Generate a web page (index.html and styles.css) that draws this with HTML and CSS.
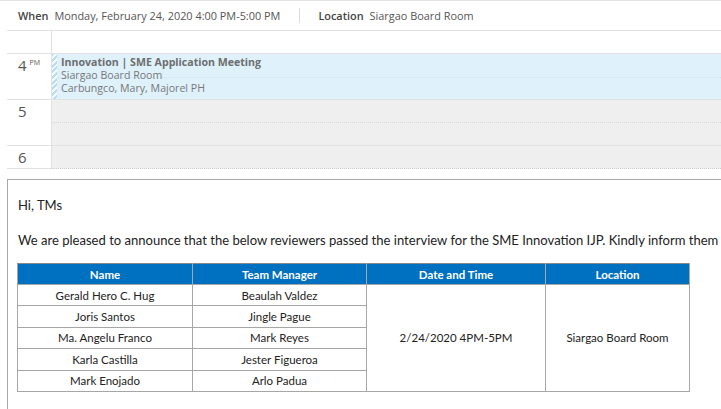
FILE: index.html
```html
<!DOCTYPE html>
<html>
<head>
<meta charset="utf-8">
<link rel="stylesheet" href="styles.css">
</head>
<body>
<div class="meta">
  <span class="lbl">When</span><span class="val">Monday, February 24, 2020 4:00 PM-5:00 PM</span>
  <span class="sep"></span>
  <span class="lbl">Location</span><span class="val">Siargao Board Room</span>
</div>
<div class="cal">
  <div class="gut r0"></div><div class="day r0"></div>
  <div class="gut r1"><span class="hr">4</span><span class="ampm">PM</span></div>
  <div class="day r1 ev">
    <div class="strip"></div>
    <div class="evbody">
      <div class="half"></div>
      <div class="evtext">
        <div class="evtitle">Innovation | SME Application Meeting</div>
        <div class="evsub">Siargao Board Room</div>
        <div class="evsub">Carbungco, Mary, Majorel PH</div>
      </div>
    </div>
  </div>
  <div class="gut r1"><span class="hr">5</span></div>
  <div class="day r1 busy"><div class="half"></div></div>
  <div class="gut r3"><span class="hr">6</span></div>
  <div class="day r3 busy last"></div>
</div>
<div class="msg">
  <p class="p1">Hi, TMs</p>
  <p class="p2">We are pleased to announce that the below reviewers passed the interview for the SME Innovation IJP. Kindly inform them</p>
  <table class="tbl">
    <colgroup><col class="c1"><col class="c2"><col class="c3"><col class="c4"></colgroup>
    <thead>
      <tr><th>Name</th><th>Team Manager</th><th>Date and Time</th><th>Location</th></tr>
    </thead>
    <tbody>
      <tr><td>Gerald Hero C. Hug</td><td>Beaulah Valdez</td><td rowspan="5">2/24/2020 4PM-5PM</td><td rowspan="5">Siargao Board Room</td></tr>
      <tr><td>Joris Santos</td><td>Jingle Pague</td></tr>
      <tr><td>Ma. Angelu Franco</td><td>Mark Reyes</td></tr>
      <tr><td>Karla Castilla</td><td>Jester Figueroa</td></tr>
      <tr><td>Mark Enojado</td><td>Arlo Padua</td></tr>
    </tbody>
  </table>
</div>
</body>
</html>
```
FILE: styles.css
```css
html, body {
  margin: 0;
  padding: 0;
  background: #ffffff;
}
html {
  height: 409px;
  overflow: hidden;
}
body {
  border-top: 1px solid #e3e3e3;
  font-family: "Open Sans", "Noto Sans", sans-serif;
}
.meta {
  margin-left: 7px;
  height: 29px;
  border-bottom: 1px solid #e1e1e1;
  display: flex;
  align-items: center;
  padding-left: 11px;
  font-size: 10.9px;
  color: #555;
}
.meta .lbl {
  font-weight: 600;
  color: #444;
  margin-right: 6px;
}
.meta .sep {
  width: 1px;
  height: 15px;
  background: #dcdcdc;
  margin: 0 18px 0 19px;
}
.cal {
  margin-left: 7px;
  display: grid;
  grid-template-columns: 44px 1fr;
}
.gut {
  border-bottom: 1px solid #e1e1e1;
  padding-left: 11px;
  color: #555;
  box-sizing: border-box;
}
.day {
  border-left: 1px solid #e1e1e1;
  border-bottom: 1px solid #e1e1e1;
  box-sizing: border-box;
}
.r0 { height: 23px; }
.r1 { height: 46px; }
.r3 { height: 23px; }
.hr {
  font-size: 15px;
  line-height: 18px;
  display: inline-block;
  margin-top: 1px;
}
.ampm {
  font-size: 7px;
  vertical-align: top;
  margin-left: 3px;
  display: inline-block;
  margin-top: 4px;
}
.busy {
  background: #efefef;
}
.busy .half {
  height: 22px;
  border-bottom: 1px dotted #d6d6d6;
}
.last {
  border-bottom: 1px dotted #cfcfcf;
}
.ev {
  background: #dff2fc;
  display: flex;
}
.strip {
  width: 5px;
  flex: none;
  background: repeating-linear-gradient(135deg, #bcdcf0 0 2px, #f4fbff 2px 4px);
}
.evbody {
  flex: 1;
  position: relative;
}
.evbody .half {
  height: 23px;
  border-bottom: 1px dotted #cfe3ee;
}
.evtext {
  position: absolute;
  left: 4px;
  top: 2px;
  font-size: 10.6px;
  line-height: 13px;
  color: #777;
}
.evtitle {
  font-weight: 700;
  color: #6d6d6d;
}
.msg {
  margin: 10px 0 0 7px;
  border-top: 1px solid #a9a9a9;
  border-left: 1px solid #a9a9a9;
  padding: 0 0 0 10px;
  font-family: "Lato", "Liberation Sans", sans-serif;
  color: #222;
  height: 240px;
}
.msg p {
  margin: 0;
  font-size: 13.05px;
  white-space: nowrap;
}
.p1 {
  padding-top: 16px;
  line-height: 18px;
}
.p2 {
  padding-top: 17px;
  line-height: 18px;
}
.tbl {
  margin: 14px 0 0 -1px;
  border-collapse: collapse;
  width: 672px;
  table-layout: fixed;
  font-size: 11.5px;
}
.c1 { width: 175px; }
.c2 { width: 174px; }
.c3 { width: 179px; }
.c4 { width: 144px; }
.tbl th {
  background: #0070c0;
  color: #fff;
  font-weight: 700;
  height: 20px;
  padding: 0;
  border: 1px solid #a6a6a6;
  border-top-color: #8a8a8a;
}
.tbl td {
  height: 20.4px;
  padding: 0;
  text-align: center;
  border: 1px solid #a6a6a6;
  color: #222;
}
```
